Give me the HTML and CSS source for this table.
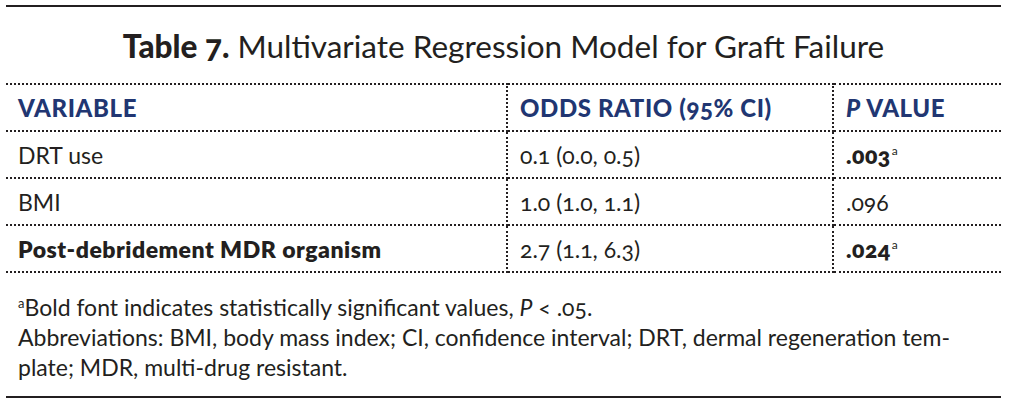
FILE: index.html
```html
<!DOCTYPE html>
<html>
<head>
<meta charset="utf-8">
<link rel="stylesheet" href="styles.css">
</head>
<body>
<div class="figure">
  <h1 class="title"><b>Table 7.</b> Multivariate Regression Model for Graft Failure</h1>
  <table class="data">
    <thead>
      <tr>
        <th class="c1">VARIABLE</th>
        <th class="c2">ODDS RATIO (95% CI)</th>
        <th class="c3"><i>P</i> VALUE</th>
      </tr>
    </thead>
    <tbody>
      <tr>
        <td class="c1">DRT use</td>
        <td class="c2">0.1 (0.0, 0.5)</td>
        <td class="c3"><b>.003</b><sup>a</sup></td>
      </tr>
      <tr>
        <td class="c1">BMI</td>
        <td class="c2">1.0 (1.0, 1.1)</td>
        <td class="c3">.096</td>
      </tr>
      <tr>
        <td class="c1"><b>Post-debridement MDR organism</b></td>
        <td class="c2">2.7 (1.1, 6.3)</td>
        <td class="c3"><b>.024</b><sup>a</sup></td>
      </tr>
    </tbody>
  </table>
  <div class="notes">
    <p><sup>a</sup>Bold font indicates statistically significant values, <i>P</i> &lt; .05.</p>
    <p>Abbreviations: BMI, body mass index; CI, confidence interval; DRT, dermal regeneration tem-<br>plate; MDR, multi-drug resistant.</p>
  </div>
</div>
</body>
</html>
```

FILE: styles.css
```css
html, body {
  margin: 0;
  padding: 0;
  background: #ffffff;
}

body {
  font-family: Lato, "Open Sans", sans-serif;
  color: #231f20;
  font-variant-numeric: oldstyle-nums;
}

.figure {
  width: 995px;
  margin: 5px 0 0 6px;
  border-top: 2px solid #231f20;
  border-bottom: 2px solid #231f20;
}

.title {
  margin: 0;
  height: 76px;
  display: flex;
  align-items: center;
  justify-content: center;
  font-size: 31.5px;
  font-weight: 400;
  padding-top: 1px;
  box-sizing: border-box;
}

.title b {
  font-weight: 900;
  margin-right: 8px;
}

.data {
  width: 100%;
  border-collapse: collapse;
  font-size: 23px;
}

.data th,
.data td {
  height: 47px;
  box-sizing: border-box;
  padding: 0 12px;
  text-align: left;
  vertical-align: middle;
  border-top: 2px dotted #231f20;
  border-bottom: 2px dotted #231f20;
}

.data th {
  color: #213672;
  font-weight: 900;
  font-size: 24px;
  letter-spacing: 0.6px;
}

.data .c1 {
  width: 501px;
  border-right: 2px dotted #231f20;
}

.data .c2 {
  width: 326px;
  border-right: 2px dotted #231f20;
}

.data td.c3 b,
.data td.c1 b {
  font-weight: 800;
  letter-spacing: 0.5px;
}

.data sup {
  font-size: 12px;
  vertical-align: 9px;
  line-height: 0;
  margin-left: 1px;
}

.notes {
  padding: 19px 12px 0 12px;
  height: 123px;
  box-sizing: border-box;
  font-size: 23px;
  line-height: 30px;
}

.notes p {
  margin: 0;
}

.notes sup {
  font-size: 13px;
  vertical-align: 8px;
  line-height: 0;
}
```
